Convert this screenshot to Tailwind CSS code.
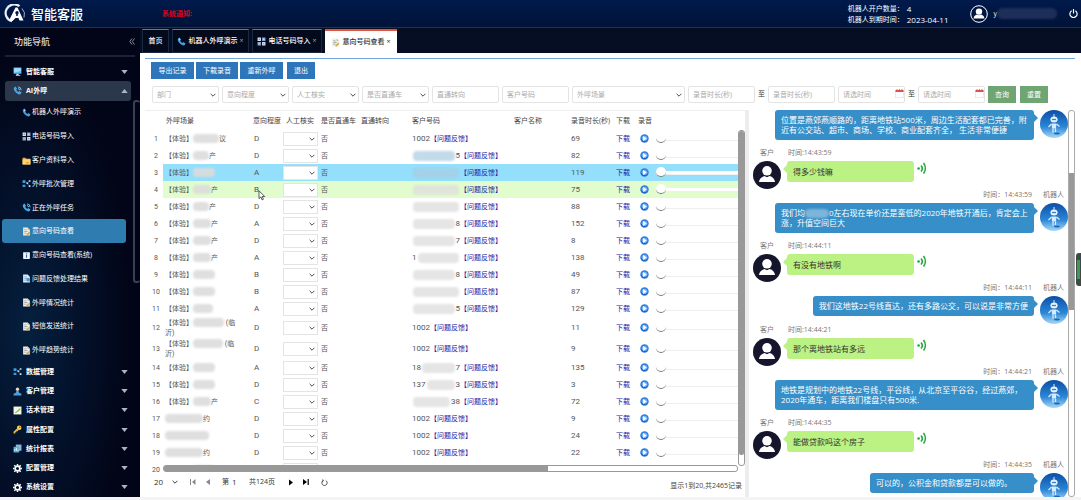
<!DOCTYPE html>
<html lang="zh-CN">
<head>
<meta charset="utf-8">
<title>智能客服</title>
<script src="https://cdn.jsdelivr.net/npm/@tailwindcss/browser@4"></script>
</head>
<body class="h-screen overflow-hidden bg-[#f4f4f4] font-['Open_Sans','Noto_Sans_CJK_SC',sans-serif] text-[7px] leading-[10px] text-[#555]">
<svg class="absolute h-0 w-0" aria-hidden="true" xmlns="http://www.w3.org/2000/svg">
  <defs><linearGradient id="sky" x1="0" y1="0" x2="0" y2="1"><stop offset="0" stop-color="#0d4fa6"/><stop offset=".6" stop-color="#2b86d6"/><stop offset="1" stop-color="#a9d9f7"/></linearGradient></defs>
  <symbol id="phone" viewBox="0 0 16 16"><path d="M2 2.500 4.500 1l2.700 4-1.500 1.800c.8 1.700 2 2.900 3.700 3.700L11.200 9l4 2.700-1.500 2.500c-1 1-3.200 1-5.500-.4C5 12 3 9.500 1.700 6.500 1.200 5 1.200 3.500 2 2.500z" fill="#3f9fe0"/><path d="M3 3 4.400 2.200l1.600 2.500L4.500 6z" fill="#a9dcff"/></symbol>
  <symbol id="call" viewBox="0 0 16 16"><path d="M2 2.500 4.500 1l2.700 4-1.500 1.800c.8 1.700 2 2.900 3.700 3.700L11.200 9l4 2.700-1.500 2.500c-1 1-3.200 1-5.500-.4C5 12 3 9.500 1.700 6.500 1.200 5 1.200 3.500 2 2.500z" fill="#4aa7e4"/><path d="M9 1.500a6 6 0 0 1 5.500 6M9 4.500a3 3 0 0 1 2.700 3" fill="none" stroke="#8fd0f7" stroke-width="1.600"/></symbol>
  <symbol id="monitor" viewBox="0 0 16 16"><rect x="1" y="1" width="14" height="11" rx="1" fill="#58b8ee"/><path d="M2 2h12v5L2 10z" fill="#9bdcff"/><path d="M6 12h4v2h3v1.500H5V14h1z" fill="#d5e8f5"/></symbol>
  <symbol id="tiles" viewBox="0 0 16 16"><path d="M1 1h6v6H1zM9 9h6v6H9z" fill="#d9e3f3"/><path d="M9 1h6v6H9zM1 9h6v6H1z" fill="#8fa9d6"/><path d="M3 3h2v2H3zM11 11h2v2h-2z" fill="#4a6fb5"/><path d="M11 3h2v2h-2z" fill="#fff"/><path d="M3 11h2v2H3z" fill="#f2d35c"/></symbol>
  <symbol id="folder" viewBox="0 0 16 16"><path d="M1 3h5l1.500 2H15v10H1z" fill="#e9a93c"/><path d="M1 6h14v9H1z" fill="#ffd56e"/><path d="M7 11h5v2H7z" fill="#e58a2c"/></symbol>
  <symbol id="nodes" viewBox="0 0 16 16"><path d="M1 2h5v5H1zM1 10h5v4H1z" fill="#3f9bd6"/><path d="M8 6h3v3H8zM12 2h3v3h-3zM12 11h3v3h-3z" fill="#cfeaff"/><path d="M6 4.500 9 7l4-3M9 8l4 4" stroke="#6fb7e6" fill="none"/></symbol>
  <symbol id="doc" viewBox="0 0 16 16"><path d="M2 1h8l4 4v10H2z" fill="#f0eee6"/><path d="M10 1v4h4z" fill="#b9b4a5"/><path d="M4 5h4M4 8h6M4 11h4" stroke="#8a8d95" stroke-width="1.200"/><path d="M8 13l5-5 2 2-5 5H8z" fill="#d8a848"/></symbol>
  <symbol id="info" viewBox="0 0 16 16"><rect x="2" y="2" width="12" height="12" rx="1" fill="#eef6ff"/><path d="M8 4v2M8 7v5" stroke="#2f6fb8" stroke-width="2"/></symbol>
  <symbol id="docblue" viewBox="0 0 16 16"><path d="M2 1h8l4 4v10H2z" fill="#dcebf8"/><path d="M4 5h5M4 8h5M4 11h3" stroke="#5b86b5"/><circle cx="11" cy="10" r="3.500" fill="#4d9be0"/></symbol>
  <symbol id="person" viewBox="0 0 16 16"><circle cx="8" cy="4" r="3" fill="#e7d8c9"/><path d="M6 7h4l1 3 4 2v3H1v-3l4-2z" fill="#4d9fd9"/></symbol>
  <symbol id="note" viewBox="0 0 16 16"><path d="M1 1h14v14H1z" fill="#f3f7ea"/><path d="M3 12 13 3v4l-8 6z" fill="#8cc152"/></symbol>
  <symbol id="key" viewBox="0 0 16 16"><path d="M1 15v-3l6-6 3 3-2 2H6v2H4v2z" fill="#f0b93a"/><circle cx="11" cy="5" r="4" fill="#ffd25a"/><circle cx="12" cy="4" r="1.200" fill="#5a4210"/></symbol>
  <symbol id="report" viewBox="0 0 16 16"><path d="M5 1h10v11H5z" fill="#8fb8d8"/><path d="M1 5h10v10H1z" fill="#5fb1d8"/><path d="M3 12V9M6 12V7M9 12v-2" stroke="#fff" stroke-width="1.500"/></symbol>
  <symbol id="gear" viewBox="0 0 16 16"><circle cx="8" cy="8" r="4.200" fill="none" stroke="#fff" stroke-width="3"/><path d="M8 0v3M8 13v3M0 8h3M13 8h3M2.300 2.300l2.200 2.200M11.500 11.500l2.200 2.200M2.300 13.700l2.200-2.200M11.500 4.500l2.200-2.200" stroke="#fff" stroke-width="2.600"/></symbol>
  <symbol id="chev" viewBox="0 0 10 6"><path d="M1 1l4 4 4-4" fill="none" stroke="currentColor" stroke-width="1.600"/></symbol>
  <symbol id="play" viewBox="0 0 16 16"><circle cx="8" cy="8" r="7.500" fill="#2f7de0"/><circle cx="8" cy="8" r="5" fill="#6fb0f8"/><path d="M5.500 3.500 12 8 5.500 12.500z" fill="#fff"/><path d="M2 9a6.200 6.200 0 0 0 11 2" fill="none" stroke="#1659b8" stroke-width="1.500"/></symbol>
  <symbol id="user" viewBox="0 0 28 28"><circle cx="14" cy="14" r="14" fill="#15152c"/><circle cx="14" cy="9.800" r="4.800" fill="#fff"/><path d="M6 21c.5-4 3.500-5.500 5.500-6l2.500 1.200 2.500-1.200c2 .5 5 2 5.500 6z" fill="#fff"/></symbol>
  <symbol id="robot" viewBox="0 0 28 28"><circle cx="14" cy="14" r="14" fill="url(#sky)"/><path d="M14 4v3" stroke="#cfe8fb"/><ellipse cx="14" cy="9.500" rx="3.600" ry="3" fill="#e3f2fd"/><path d="M12 9.500h4" stroke="#3c82c2" stroke-width="1.300"/><path d="M11.500 13.500h5l-.5 5h-4z" fill="#d6ebfb"/><path d="M11.500 14 8.500 17M16.500 14l3 2.500M13 18.500v4M15.500 18.500v3.500" stroke="#d6ebfb" stroke-width="1.300"/><ellipse cx="17" cy="23.500" rx="3" ry="1" fill="#1b67b5"/></symbol>
  <symbol id="sound" viewBox="0 0 11 14"><circle cx="1.600" cy="7.500" r="1.300" fill="#20a838"/><path d="M4 4.500a4.500 4.500 0 0 1 0 6M6.500 2a8.500 8.500 0 0 1 0 10.500" fill="none" stroke="#20a838" stroke-width="1.600"/></symbol>
  <symbol id="cal" viewBox="0 0 9 9"><path d="M.5 1.500h8v7h-8z" fill="#fff" stroke="#ddd" stroke-width=".6"/><path d="M.5 1h8v2h-8z" fill="#d9534f"/><path d="M2 1V.2M4.500 1V.2M7 1V.2" stroke="#d9534f"/></symbol>
</svg>

<div class="flex h-full flex-col pb-[3px]">
  <header class="flex h-[28px] shrink-0 items-center border-b border-[#1c3157] bg-gradient-to-b from-[#001a4c] to-[#001338] pl-[4px] pr-[3px] text-white">
    <svg class="h-[19px] w-[22px]" viewBox="0 0 22 19"><path d="M15.500 2.200A8.600 8.600 0 1 0 8 17.300" fill="none" stroke="#e8edf6" stroke-width="2.200"/><path d="M5 16.500 11.500 3.500h2L19.500 16.500h-4l-1-2.500h-3l-3 3z" fill="#fff"/><circle cx="13" cy="8.800" r="1.700" fill="#001a4c"/><path d="M12.200 9h1.600v3h-1.600z" fill="#001a4c"/><path d="M18 4.500a8.600 8.600 0 0 1 2 9" fill="none" stroke="#9fb0cf"/></svg>
    <h1 class="ml-[5px] text-[13px] leading-[18px] font-medium">智能客服</h1>
    <p class="ml-[79px] font-bold text-[#e00018]">系统通知:</p>
    <dl class="ml-auto grid grid-cols-[59px_auto] leading-[11px]">
      <dt>机器人开户数量：</dt><dd class="text-[8px]">4</dd>
      <dt>机器人到期时间：</dt><dd class="text-[8px]">2023-04-11</dd>
    </dl>
    <svg class="ml-[22px] h-[18px] w-[18px]" viewBox="0 0 18 18"><circle cx="9" cy="9" r="8.300" fill="none" stroke="#fff" stroke-width="1"/><circle cx="9" cy="6.600" r="3.200" fill="#fff"/><path d="M3.500 13.500c.3-2.700 2-3.500 3.500-4l2 .8 2-.8c1.500.5 3.200 1.300 3.500 4z" fill="#fff"/></svg>
    <span class="ml-[5px]">y</span>
    <span class="h-[11px] w-[60px] rounded-full bg-[#1d2f58] blur-[1px]"></span>
    <button class="ml-[12px]" aria-label="退出系统"><svg class="h-[9px] w-[9px]" viewBox="0 0 10 10"><path d="M3 2a4 4 0 1 0 4 0M5 0v5" fill="none" stroke="#fff" stroke-width="1.300"/></svg></button>
  </header>

  <div class="flex min-h-0 flex-1">
    <aside class="relative flex w-[140px] shrink-0 flex-col bg-[#020517] bg-[radial-gradient(ellipse_at_20%_64%,#05203f_0%,#031029_35%,#020517_65%)] text-white">
      <div class="mx-[5px] flex h-[29px] shrink-0 items-center justify-between border-b-2 border-[#1c2233] pl-[9px] text-[9px]"><span>功能导航</span>
        <button aria-label="收起" class="text-[#8f97a8]"><svg class="h-[7px] w-[6px]" viewBox="0 0 6 7"><path d="M3 .5.800 3.500 3 6.500M5.500.5 3.300 3.500l2.200 3" fill="none" stroke="currentColor" stroke-width=".9"/></svg></button></div>
      <nav id="nav" class="flex min-h-0 flex-1 flex-col pt-[5px]"></nav>
      <div class="absolute top-[72px] right-0 h-[183px] w-[7px] rounded-[3px] border-2 border-r-0 border-[#3b404f]"></div>
    </aside>

    <div class="flex min-w-0 flex-1 flex-col">
      <div class="flex h-[25px] shrink-0 gap-[3px] bg-[#060e24] pt-[1px] pl-[2px] font-medium text-white">
        <button class="w-[27px] border border-[#1a2740] border-t-[#2f8fae] bg-[#030a1c]">首页</button>
        <button class="flex w-[77px] items-center justify-center gap-[2px] border border-[#1a2740] border-t-[#2f8fae] bg-[#030a1c]"><svg class="h-[9px] w-[9px]"><use href="#phone"/></svg>机器人外呼演示<span class="text-[#9aa3b5]">×</span></button>
        <button class="flex w-[70px] items-center justify-center gap-[2px] border border-[#1a2740] border-t-[#2f8fae] bg-[#030a1c]"><svg class="h-[9px] w-[9px]"><use href="#tiles"/></svg>电话号码导入<span class="text-[#9aa3b5]">×</span></button>
        <button class="flex w-[72px] items-center justify-center gap-[2px] border-t-2 border-[#e0533f] bg-white text-[#333]"><svg class="h-[9px] w-[9px]"><use href="#doc"/></svg>意向号码查看<span>×</span></button>
      </div>

      <main class="flex min-h-0 flex-1 flex-col bg-white pt-[5px] pr-[6px] pl-[5px]">
        <div class="flex h-[25px] shrink-0 items-start gap-[2px] border-t border-[#6fa6dc] pt-[3px] pl-[6px] text-white">
          <button class="h-[17px] w-[43px] bg-[#2f75b9]">导出记录</button>
          <button class="h-[17px] w-[42px] bg-[#2f75b9]">下载录音</button>
          <button class="h-[17px] w-[43px] bg-[#2f75b9]">重新外呼</button>
          <button class="ml-[2px] h-[17px] w-[28px] bg-[#2f75b9]">退出</button>
        </div>
        <form id="filters" class="flex h-[27px] shrink-0 items-start gap-[3px] pt-[3px] pl-[7px] text-[#aaa]"></form>

        <div class="flex min-h-0 flex-1">
          <section class="flex min-w-0 flex-1 flex-col border-t border-[#eee] pl-[4px]">
            <div class="relative flex min-h-0 flex-1">
              <div class="min-w-0 flex-1 overflow-hidden">
                <table class="w-full table-fixed border-collapse">
                  <colgroup><col class="w-[14px]"><col class="w-[87px]"><col class="w-[33px]"><col class="w-[35px]"><col class="w-[40px]"><col class="w-[51px]"><col class="w-[102px]"><col class="w-[57px]"><col class="w-[45px]"><col class="w-[22px]"><col></colgroup>
                  <thead><tr class="h-[19px] text-left whitespace-nowrap text-[#444] [&>th]:py-0 [&>th]:pr-0 [&>th]:pl-[3px] [&>th]:font-normal">
                    <th></th><th>外呼场景</th><th>意向程度</th><th>人工核实</th><th>是否直通车</th><th>直通转向</th><th>客户号码</th><th>客户名称</th><th>录音时长(秒)</th><th>下载</th><th>录音</th></tr></thead>
                  <tbody id="rows"></tbody>
                </table>
              </div>
              <div class="mt-[19px] mb-[7px] h-auto w-[7px] rounded-[3px] border border-[#999]"><div class="h-[97%] rounded-[2px] bg-[#999]"></div></div>
              <div class="absolute right-[7px] bottom-0 left-[14px] h-[8px] bg-white"><div class="h-[7px] rounded-[3px] border border-[#999]"><div class="h-full w-[67%] bg-[#999]"></div></div></div>
            </div>
            <footer class="flex h-[24px] shrink-0 items-start pt-[4px] pl-[5px] text-[#333]">
              <label class="relative flex items-center"><select aria-label="每页条数" class="h-[10px] w-[26px] appearance-none text-[8px] leading-[10px]"><option>20</option></select><svg class="pointer-events-none absolute right-[2px] h-[4px] w-[6px]"><use href="#chev"/></svg></label>
              <div class="flex h-[10px] items-center">
                <button aria-label="首页" class="ml-[10px] text-[#888]"><svg class="h-[6px] w-[6px]" viewBox="0 0 6 6"><path d="M0 0h1v6H0zM5.500 0v6L2 3z" fill="currentColor"/></svg></button>
                <button aria-label="上一页" class="ml-[9px] text-[#888]"><svg class="h-[6px] w-[6px]" viewBox="0 0 6 6"><path d="M5 0v6L1 3z" fill="currentColor"/></svg></button>
                <label class="ml-[11px] flex items-center">第<input aria-label="页码" class="w-[20px] pl-[3px] text-[8px]" value="1"></label>
                <span class="w-[30px] whitespace-nowrap">共124页</span>
                <button aria-label="下一页" class="ml-[9px] text-black"><svg class="h-[7px] w-[6px]" viewBox="0 0 6 6"><path d="M1 0v6l4-3z" fill="currentColor"/></svg></button>
                <button aria-label="末页" class="ml-[9px] text-black"><svg class="h-[6px] w-[6px]" viewBox="0 0 6 6"><path d="M0 0v6l4-3zM4.600 0h1.200v6H4.600z" fill="currentColor"/></svg></button>
                <button aria-label="刷新" class="ml-[12px]"><svg class="h-[7px] w-[7px]" viewBox="0 0 8 8"><path d="M2.500 1.800A3 3 0 1 0 5.500 1.800M2 .5l.7 1.700L1 3" fill="none" stroke="#333" stroke-width="1"/></svg></button>
              </div>
              <p class="ml-auto pt-[4px] pr-[3px] text-[#444]">显示1到20,共2465记录</p>
            </footer>
          </section>
          <div class="w-[4px] bg-[#ededed]"></div>
          <section class="flex w-[326px] shrink-0">
            <div id="chat" class="min-w-0 flex-1 overflow-hidden pl-[4px]"></div>
            <div class="w-[7px] rounded-[3px] border border-[#aaa] pt-[62px]"><div class="h-[137px] bg-[#999]"></div></div>
          </section>
        </div>
      </main>
    </div>
  </div>
</div>
<div class="absolute top-[253px] right-0 h-[33px] w-[5px] rounded-l-[3px] bg-[#3d4a48] py-[7px] pl-[1px]"><div class="h-full w-[3px] bg-[#3f9a50]"></div></div>
<svg class="absolute top-[190px] left-[258px] h-[11px] w-[8px]" viewBox="0 0 8 11"><path d="M1 .800v7.800l1.900-1.700 1.200 3 1.300-.6-1.200-2.800h2.500z" fill="#fff" stroke="#333" stroke-width=".8"/></svg>

<script>
const icon = (n, c) => `<svg class="${c}"><use href="#${n}"/></svg>`;
const group = (n, t, open) => `<button class="${open
  ? 'mr-[9px] ml-[5px] flex min-h-0 grow-[30] basis-0 items-center rounded-[3px] bg-[#2b384b] pr-[2px] pl-[8px] font-bold'
  : 'mr-[9px] ml-[5px] flex min-h-0 grow-[30] basis-0 items-center pr-[2px] pl-[8px] font-bold'}">${icon(n, 'mr-[4px] h-[9px] w-[9px]')}${t}<svg class="mr-[1px] ml-auto h-[4px] w-[7px] text-[#aab4c6]" viewBox="0 0 8 5"><path d="${open ? 'M0 5h8L4 0z' : 'M0 0h8L4 5z'}" fill="currentColor"/></svg></button>`;
const subs = [['phone','机器人外呼演示'],['tiles','电话号码导入'],['folder','客户资料导入'],['nodes','外呼批次管理'],['call','正在外呼任务'],['doc','意向号码查看'],['info','意向号码查看(系统)'],['docblue','问题反馈处理结果'],['doc','外呼情况统计'],['doc','短信发送统计'],['doc','外呼趋势统计']];
document.getElementById('nav').innerHTML = group('monitor','智能客服') + group('call','AI外呼',true) +
  subs.map(([n,t],i) => `<a href="#" class="${i === 5
    ? 'mr-[14px] ml-[2px] flex min-h-0 grow-[37] basis-0 items-center rounded-[3px] bg-[#2f7db0] pl-[20px]'
    : 'mr-[14px] ml-[2px] flex min-h-0 grow-[37] basis-0 items-center pl-[20px]'}">${icon(n,'mr-[1px] h-[9px] w-[9px]')}${t}</a>`).join('') +
  [['nodes','数据管理'],['person','客户管理'],['note','话术管理'],['key','属性配置'],['report','统计报表'],['gear','配置管理'],['gear','系统设置']].map(g => group(...g)).join('');

const chev = '<svg class="pointer-events-none absolute top-1/2 right-[3px] h-[4px] w-[6px] -translate-y-1/2 text-[#444]"><use href="#chev"/></svg>';
const sel = (t, wide) => `<span class="${wide ? 'relative w-[113px]' : 'relative w-[67px]'}"><select aria-label="${t}" class="block h-[17px] w-full appearance-none rounded-[2px] border border-[#e4e4e4] pl-[4px]"><option>${t}</option></select>${chev}</span>`;
const inp = (t, cal) => `<span class="relative w-[67px]"><input aria-label="${t}" placeholder="${t}" class="block h-[17px] w-full rounded-[2px] border border-[#e4e4e4] pl-[4px] placeholder:text-[#aaa]">${cal ? '<svg class="absolute top-[3px] right-[1px] h-[9px] w-[9px]"><use href="#cal"/></svg>' : ''}</span>`;
const to = '<span class="w-[7px] pt-[3px] text-[#333]">至</span>';
document.getElementById('filters').innerHTML = sel('部门') + sel('意向程度') + sel('人工核实') + sel('是否直通车') + inp('直通转向') + inp('客户号码') + sel('外呼场景', true) + inp('录音时长(秒)') + to + inp('录音时长(秒)') + inp('请选时间', true) + to + inp('请选时间', true) +
  '<button type="button" class="h-[17px] w-[28px] bg-[#6fa573] text-white">查询</button><button type="button" class="ml-[1px] h-[17px] w-[28px] bg-[#6fa573] text-white">重置</button>';

// scene: [smudge width, text after it]; phone: null for extension 1002, or [text before, text after] around the masked digits
const data = [
  [[26,'议'],'D',null,69],[[16,'产'],'D',['','5'],82],[[22,''],'A',['',''],119],[[18,'产'],'B',['',''],75],[[16,'产'],'D',['',''],88],
  [[18,'产'],'A',['','8'],152],[[18,'产'],'D',['','7'],8],[[18,'产'],'A',['1',''],138],[[22,''],'B',['','8'],49],[[22,''],'B',['',''],87],
  [[20,''],'A',['','5'],129],[[31,' (临<br>沂)'],'D',null,11],[[30,' (临<br>沂)'],'D',null,9],[[22,''],'A',['18','7'],135],[[22,''],'D',['137','3'],3],
  [[18,'产'],'C',['','38'],72],[[38,'约'],'D',null,9],[[44,''],'D',null,24],[[38,'约'],'D',null,22],[[22,''],'D',null,18]];
const smudge = w => `<span class="inline-block h-[9px] rounded-[4px] bg-[#dcdcdc]/90 align-middle blur-[1px]" style="width:${w}px"></span>`;
document.getElementById('rows').innerHTML = data.map(([sc, lv, ph, sec], i) => {
  const bg = i === 2 ? '[&>td+td]:bg-[#93dffc]' : i === 3 ? '[&>td+td]:bg-[#e1fccd]' : '[&>td+td]:bg-white';
  const h = i === 11 || i === 12 ? 'h-[21px]' : 'h-[17px]';
  const mask = i > 0 && i < 3 ? 'mx-[1px] h-[10px] flex-1 rounded-[4px] bg-[#a9cbe0]/70 blur-[1px]' : 'mx-[1px] h-[10px] flex-1 rounded-[4px] bg-[#dedede]/80 blur-[1px]';
  const phone = ph === null ? '<span class="text-[8px]">1002</span>' : `<span class="flex w-[48px] items-center text-[8px]">${ph[0]}<span class="${mask}"></span>${ph[1]}</span>`;
  return `<tr class="${h} ${bg} font-[Roboto,'Noto_Sans_CJK_SC',sans-serif] whitespace-nowrap [&>td]:p-0">
    <td class="text-center">${i + 1}</td>
    <td><div class="pl-[2px] leading-[10px]">${i > 15 && i < 19 ? '' : '【体验】'}${smudge(sc[0])}${sc[1]}</div></td>
    <td><span class="pl-[4px] text-[8px]">${lv}</span></td>
    <td><span class="relative block w-[35px]"><select aria-label="人工核实 ${i + 1}" class="block h-[14px] w-full appearance-none border border-[#e4e4e4] bg-white"><option></option></select>${chev}</span></td>
    <td><span class="pl-[3px]">否</span></td><td></td>
    <td><div class="flex items-center pl-[3px]">${phone}<a href="#" class="text-[#1a1aa6]">【问题反馈】</a></div></td>
    <td></td><td><span class="pl-[3px] text-[8px]">${sec}</span></td>
    <td><a href="#" class="pl-[3px] text-[#1a1aa6]">下载</a></td>
    <td><div class="flex items-center pl-[5px]"><button aria-label="播放 ${i + 1}">${icon('play','h-[9px] w-[9px]')}</button><input type="range" value="0" aria-label="播放进度 ${i + 1}" class="ml-[7px] h-[12px] min-w-0 flex-1 appearance-none bg-transparent [&::-webkit-slider-runnable-track]:h-[4px] [&::-webkit-slider-runnable-track]:border-b [&::-webkit-slider-runnable-track]:border-[#eee] [&::-webkit-slider-runnable-track]:bg-white [&::-webkit-slider-thumb]:mt-[-4px] [&::-webkit-slider-thumb]:h-[10px] [&::-webkit-slider-thumb]:w-[10px] [&::-webkit-slider-thumb]:appearance-none [&::-webkit-slider-thumb]:rounded-full [&::-webkit-slider-thumb]:border-b [&::-webkit-slider-thumb]:border-[#777] [&::-webkit-slider-thumb]:bg-white"></div></td></tr>`;
}).join('');

const robot = (time, text, two) => (time ? `<div class="flex h-[15px] justify-end pt-[2px] pr-[4px] text-[#777]"><span>时间：<span>${time}</span></span><span class="ml-[11px]">机器人</span></div>` : '') +
  `<div class="${two ? 'flex h-[36px] items-start justify-end' : 'flex h-[27px] items-start justify-end'}"><p class="${two ? 'w-[259px] rounded-[3px] bg-[#368fc8] px-[6px] py-[5px] text-[8px] leading-[10px] whitespace-nowrap text-white' : 'rounded-[3px] bg-[#368fc8] px-[6px] py-[5px] text-[8px] leading-[10px] whitespace-nowrap text-white'}">${text}</p><span class="mt-[4px] mr-[2px] h-0 w-0 border-y-[4px] border-l-[4px] border-y-transparent border-l-[#368fc8]"></span>${icon('robot','h-[28px] w-[28px] shrink-0')}</div>`;
const client = (time, text) => `<div class="flex h-[15px] pt-[2px] pl-[7px] text-[#777]"><span class="w-[28px]">客户</span><span>时间:${time}</span></div>
  <div class="flex h-[27px] items-start">${icon('user','h-[28px] w-[28px] shrink-0')}<span class="mt-[4px] ml-[2px] h-0 w-0 border-y-[4px] border-r-[4px] border-y-transparent border-r-[#bbf283]"></span><p class="w-[127px] rounded-[3px] bg-[#bbf283] px-[6px] py-[5px] text-[8px] leading-[11px] text-[#333]">${text}</p><button aria-label="播放语音" class="ml-[3px]">${icon('sound','h-[14px] w-[11px]')}</button></div>`;
document.getElementById('chat').innerHTML =
  robot('', '位置是燕郊燕顺路的，距离地铁站500米，周边生活配套都已完善，附<br>近有公交站、超市、商场、学校、商业配套齐全， 生活非常便捷', true) +
  client('14:43:59', '得多少钱嘛') +
  robot('14:43:59', '我们均<span class="inline-block h-[9px] w-[24px] rounded-full bg-[#7db4da] align-middle blur-[1px]"></span>0左右现在单价还是蛮低的2020年地铁开通后，肯定会上<br>涨，升值空间巨大', true) +
  client('14:44:11', '有没有地铁啊') +
  robot('14:44:11', '我们这地铁22号线直达，还有多路公交，可以说是非常方便') +
  client('14:44:21', '那个离地铁站有多远') +
  robot('14:44:21', '地铁是规划中的地铁22号线，平谷线，从北京至平谷谷，经过燕郊，<br>2020年通车，距离我们楼盘只有500米.', true) +
  client('14:44:35', '能做贷款吗这个房子') +
  robot('14:44:35', '可以的，公积金和贷款都是可以做的。<span class="inline-block w-4"></span>');
</script>
</body>
</html>
